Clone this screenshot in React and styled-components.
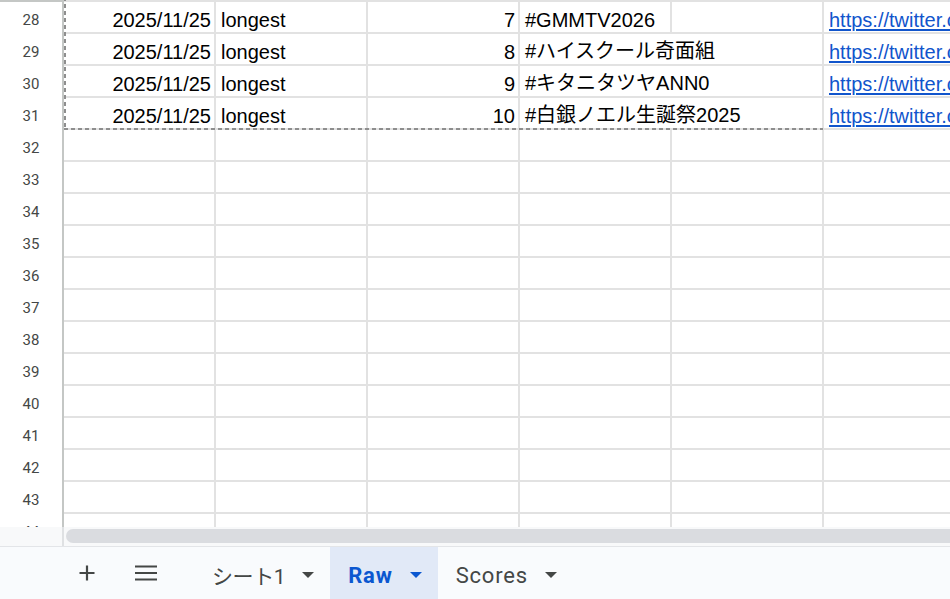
import styled, { createGlobalStyle } from 'styled-components'

const rows = [
  { n: 28, date: '2025/11/25', type: 'longest', rank: 7, tag: '#GMMTV2026', link: 'https://twitter.com/search?q=%23GMMTV2026' },
  { n: 29, date: '2025/11/25', type: 'longest', rank: 8, tag: '#ハイスクール奇面組', link: 'https://twitter.com/search?q=%23', wide: true },
  { n: 30, date: '2025/11/25', type: 'longest', rank: 9, tag: '#キタニタツヤANN0', link: 'https://twitter.com/search?q=%23', wide: true },
  { n: 31, date: '2025/11/25', type: 'longest', rank: 10, tag: '#白銀ノエル生誕祭2025', link: 'https://twitter.com/search?q=%23', wide: true },
]

const empty = Array.from({ length: 13 }, (_, i) => 32 + i)

const App = () => {
  return (
    <>
      <Global />
      <Sheet>
        <GridArea>
          <GridTop />
          {rows.map((r) => (
            <Row key={r.n}>
              <RowHead>{r.n}</RowHead>
              <Cell $align='right'>{r.date}</Cell>
              <Cell>{r.type}</Cell>
              <Cell $align='right'>{r.rank}</Cell>
              <Cell $span={r.wide ? 2 : 1}>{r.tag}</Cell>
              {!r.wide && <Cell />}
              <Cell><Link href='#'>{r.link}</Link></Cell>
            </Row>
          ))}
          {empty.map((n) => (
            <Row key={n}>
              <RowHead>{n}</RowHead>
              <Cell /><Cell /><Cell /><Cell /><Cell /><Cell />
            </Row>
          ))}
          <Marquee />
        </GridArea>

        <ScrollStrip>
          <ScrollCorner />
          <ScrollTrack>
            <Thumb />
          </ScrollTrack>
        </ScrollStrip>

        <TabBar>
          <IconButton aria-label='シートを追加'>
            <svg width='18' height='18' viewBox='0 0 18 18'>
              <path d='M9 1.5v15M1.5 9h15' stroke='#444746' strokeWidth='2.2' fill='none' />
            </svg>
          </IconButton>
          <IconButton aria-label='すべてのシート'>
            <svg width='24' height='18' viewBox='0 0 24 18'>
              <path d='M1 2.5h22M1 9h22M1 15.5h22' stroke='#444746' strokeWidth='2.2' fill='none' />
            </svg>
          </IconButton>
          <Tabs>
            <Tab $cjk>シート1<Caret /></Tab>
            <Tab $active>Raw<Caret $active /></Tab>
            <Tab>Scores<Caret /></Tab>
          </Tabs>
        </TabBar>
      </Sheet>
    </>
  )
}

// Styles

const Global = createGlobalStyle`
  html, body {
    margin: 0;
    padding: 0;
    background: #ffffff;
  }
  body {
    font-family: "Liberation Sans", Arial, "Noto Sans CJK JP", sans-serif;
  }
`

const Sheet = styled.div`
  width: 950px;
  height: 599px;
  display: flex;
  flex-direction: column;
  overflow: hidden;
  background: #ffffff;
`

const GridArea = styled.div`
  position: relative;
  height: 527px;
  flex: none;
  overflow: hidden;
`

const GridTop = styled.div`
  height: 2px;
  background: linear-gradient(90deg, #c4c7c5 0 64px, #e2e2e2 64px);
`

const Row = styled.div`
  display: grid;
  grid-template-columns: 64px repeat(6, 152px);
  height: 32px;
  box-sizing: border-box;
  border-bottom: 2px solid #e2e2e2;
`

const RowHead = styled.div`
  display: flex;
  align-items: center;
  justify-content: center;
  padding-top: 3px;
  box-sizing: border-box;
  border-right: 2px solid #c4c7c5;
  margin-bottom: -2px;
  font-family: Roboto, "Liberation Sans", sans-serif;
  font-size: 15px;
  color: #444746;
  background: #ffffff;
`

const Cell = styled.div`
  grid-column: span ${(p) => p.$span || 1};
  display: flex;
  align-items: flex-end;
  justify-content: ${(p) => (p.$align === 'right' ? 'flex-end' : 'flex-start')};
  padding: ${(p) => (p.$align === 'right' ? '0 3px 0 0' : '0 0 0 5px')};
  border-right: 2px solid #e2e2e2;
  box-sizing: border-box;
  overflow: hidden;
  white-space: nowrap;
  font-size: 20px;
  color: #000000;
`

const Link = styled.a`
  color: #1155cc;
  text-decoration: underline;
  text-underline-offset: 2px;
`

const Marquee = styled.div`
  position: absolute;
  left: 64px;
  top: -10px;
  width: 759px;
  height: 140px;
  pointer-events: none;
  background:
    repeating-linear-gradient(90deg, #8e8e8e 0 4px, transparent 4px 7px) left bottom / 100% 2px no-repeat,
    repeating-linear-gradient(180deg, #8e8e8e 0 4px, transparent 4px 7px) left top / 2px 100% no-repeat;
`

const ScrollStrip = styled.div`
  display: flex;
  height: 19px;
  flex: none;
  background: #f8f9fa;
  border-bottom: 1px solid #e3e5e8;
`

const ScrollCorner = styled.div`
  width: 64px;
  box-sizing: border-box;
  border-right: 2px solid #dfe1e3;
`

const ScrollTrack = styled.div`
  flex: 1;
  padding: 2px 0 3px 2px;
  display: flex;
`

const Thumb = styled.div`
  flex: 1;
  margin-right: -20px;
  border-radius: 8px;
  background: #dadce0;
`

const TabBar = styled.div`
  flex: 1;
  display: flex;
  align-items: stretch;
  padding-left: 67px;
  background: #f9fbfd;
`

const IconButton = styled.button`
  width: 40px;
  border: none;
  background: transparent;
  padding: 0;
  display: flex;
  align-items: center;
  justify-content: center;
  margin-right: 19px;
  cursor: pointer;
`

const Tabs = styled.div`
  display: flex;
  margin-left: 9px;
`

const Tab = styled.div`
  display: flex;
  align-items: center;
  gap: 15px;
  padding: 4px 16px 0 18px;
  font-family: Roboto, "Noto Sans CJK JP", sans-serif;
  font-size: ${(p) => (p.$cjk ? '21px' : '22px')};
  font-weight: ${(p) => (p.$active ? 700 : 400)};
  letter-spacing: ${(p) => (p.$cjk ? '-0.4px' : '0.8px')};
  color: ${(p) => (p.$active ? '#0b57d0' : '#444746')};
  background: ${(p) => (p.$active ? '#e1e9f7' : 'transparent')};
`

const Caret = styled.span`
  width: 0;
  height: 0;
  margin-left: 2px;
  border-left: 6px solid transparent;
  border-right: 6px solid transparent;
  border-top: 6px solid ${(p) => (p.$active ? '#0b57d0' : '#444746')};
`

export default App
